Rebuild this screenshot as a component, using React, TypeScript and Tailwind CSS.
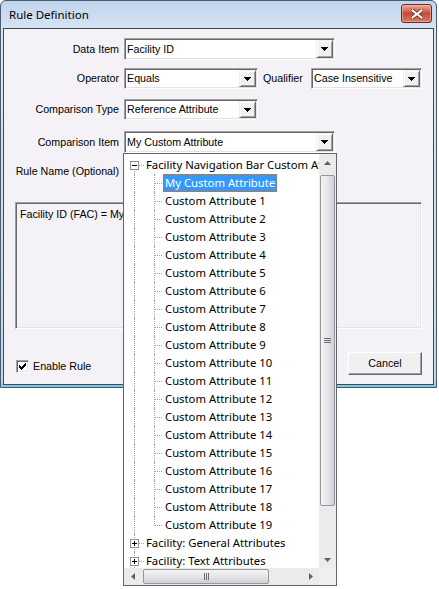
import React from 'react'

const DownGlyph = () => (
  <svg width="7" height="4" viewBox="0 0 7 4" shapeRendering="crispEdges">
    <path d="M0 0h7v1h-1v1h-1v1h-1v1h-1v-1h-1v-1h-1v-1h-1z" fill="#000" />
  </svg>
)

// classic sunken combo box
const Combo: React.FC<{ value: string; className: string }> = ({ value, className }) => (
  <div
    className={
      'flex bg-white border border-t-[#a0a0a0] border-l-[#a0a0a0] border-b-white border-r-white p-px shadow-[inset_1px_1px_0_#696969,inset_-1px_-1px_0_#e3e3e3] ' +
      className
    }
  >
    <span className="flex-1 flex items-center pl-[1px] whitespace-nowrap overflow-hidden">{value}</span>
    <span className="w-[17px] flex items-center justify-center bg-[#f0f0f0] border border-t-[#f0f0f0] border-l-[#f0f0f0] border-r-[#696969] border-b-[#696969] shadow-[inset_1px_1px_0_#fff,inset_-1px_-1px_0_#a0a0a0]">
      <DownGlyph />
    </span>
  </div>
)

const Label: React.FC<{ children: React.ReactNode }> = ({ children }) => (
  <span className="w-[115px] mr-[5px] text-right whitespace-nowrap">{children}</span>
)

const Button: React.FC<{ children: React.ReactNode }> = ({ children }) => (
  <button className="w-[74px] h-[23px] flex items-center justify-center bg-[#f0f0f0] border border-t-white border-l-white border-r-[#696969] border-b-[#696969] shadow-[inset_-1px_-1px_0_#a0a0a0]">
    {children}
  </button>
)

const Expander: React.FC<{ open: boolean }> = ({ open }) => (
  <span className="absolute left-[6px] top-[5px] w-[9px] h-[9px] border border-[#919191] bg-white">
    <span className="absolute left-[1px] top-[3px] w-[5px] h-px bg-black" />
    {!open && <span className="absolute left-[3px] top-[1px] w-px h-[5px] bg-black" />}
  </span>
)

const RootRow: React.FC<{ label: string; open: boolean; first?: boolean }> = ({ label, open, first }) => (
  <div className="relative h-[18px]">
    <span className={`absolute left-[10px] bottom-0 border-l border-dotted border-[#a0a0a0] ${first ? 'top-[9px]' : 'top-0'}`} />
    <span className="absolute left-[15px] top-[9px] w-[5px] border-t border-dotted border-[#a0a0a0]" />
    <Expander open={open} />
    <span className="absolute left-[20px] top-0 h-[18px] px-px border border-transparent leading-[16px] whitespace-nowrap">
      {label}
    </span>
  </div>
)

const ChildRow: React.FC<{ label: string; selected?: boolean; last?: boolean }> = ({ label, selected, last }) => (
  <div className="relative h-[18px]">
    <span className="absolute left-[10px] top-0 h-full border-l border-dotted border-[#a0a0a0]" />
    <span className={`absolute left-[30px] top-0 border-l border-dotted border-[#a0a0a0] ${last ? 'h-[10px]' : 'h-full'}`} />
    <span className="absolute left-[31px] top-[9px] w-[7px] border-t border-dotted border-[#a0a0a0]" />
    <span
      className={`absolute left-[39px] top-0 h-[18px] px-px border leading-[16px] whitespace-nowrap ${
        selected ? 'bg-[#3399ff] text-white border-dotted border-[#b8763a]' : 'border-transparent'
      }`}
    >
      {label}
    </span>
  </div>
)

const Thumb: React.FC<{ className: string; vertical?: boolean }> = ({ className, vertical }) => (
  <div
    className={
      'flex items-center justify-center border border-[#979797] rounded-[2px] ' +
      (vertical
        ? 'bg-gradient-to-r from-[#f4f4f4] via-[#e6e6e9] to-[#cfd0d8] '
        : 'bg-gradient-to-b from-[#f4f4f4] via-[#e6e6e9] to-[#cfd0d8] ') +
      className
    }
  >
    {vertical ? (
      <div className="flex flex-col gap-[1px]">
        <span className="w-[7px] h-px bg-[#6d6d6d]" />
        <span className="w-[7px] h-px bg-[#6d6d6d]" />
        <span className="w-[7px] h-px bg-[#6d6d6d]" />
      </div>
    ) : (
      <div className="flex gap-[1px]">
        <span className="w-px h-[7px] bg-[#6d6d6d]" />
        <span className="w-px h-[7px] bg-[#6d6d6d]" />
        <span className="w-px h-[7px] bg-[#6d6d6d]" />
      </div>
    )}
  </div>
)

const ScrollGlyph: React.FC<{ dir: 'up' | 'down' | 'left' | 'right' }> = ({ dir }) => {
  const d = {
    up: 'M0 4L3.5 0L7 4z',
    down: 'M0 0L7 0L3.5 4z',
    left: 'M4 0L4 7L0 3.5z',
    right: 'M0 0L4 3.5L0 7z',
  }[dir]
  const vert = dir === 'up' || dir === 'down'
  return (
    <svg width={vert ? 7 : 4} height={vert ? 4 : 7} viewBox={vert ? '0 0 7 4' : '0 0 4 7'}>
      <path d={d} fill="#606060" />
    </svg>
  )
}

const childLabels = ['My Custom Attribute', ...Array.from({ length: 19 }, (_, i) => `Custom Attribute ${i + 1}`)]

const TreeDropdown: React.FC = () => (
  <div className="absolute left-[123px] top-[153px] w-[214px] h-[433px] border border-[#646464] bg-white flex flex-col font-['Noto_Sans',sans-serif] text-[11.3px] text-black">
    <div className="flex flex-1 min-h-0">
      <div className="flex-1 min-w-0 overflow-hidden pt-[2px]">
        <RootRow label="Facility Navigation Bar Custom Attributes" open first />
        {childLabels.map((label, i) => (
          <ChildRow key={label} label={label} selected={i === 0} last={i === childLabels.length - 1} />
        ))}
        <RootRow label="Facility: General Attributes" open={false} />
        <RootRow label="Facility: Text Attributes" open={false} />
      </div>
      <div className="w-[17px] flex flex-col bg-[#ebebed]">
        <div className="h-[17px] flex items-center justify-center">
          <ScrollGlyph dir="up" />
        </div>
        <Thumb vertical className="mt-[4px] mx-px h-[331px]" />
        <div className="flex-1" />
        <div className="h-[17px] flex items-center justify-center">
          <ScrollGlyph dir="down" />
        </div>
      </div>
    </div>
    <div className="h-[17px] flex">
      <div className="flex-1 flex bg-[#ebebed]">
        <div className="w-[17px] flex items-center justify-center">
          <ScrollGlyph dir="left" />
        </div>
        <Thumb className="ml-[2px] my-px w-[126px]" />
        <div className="flex-1" />
        <div className="w-[17px] flex items-center justify-center">
          <ScrollGlyph dir="right" />
        </div>
      </div>
      <div className="w-[17px] bg-[#f0f0f0]" />
    </div>
  </div>
)

const App: React.FC = () => {
  return (
    <div className="relative w-[439px] h-[589px] bg-white overflow-hidden">
      {/* Window */}
      <div className="w-[437px] h-[388px] flex flex-col border border-[#4c5a6d] rounded-t-[6px] bg-[linear-gradient(to_bottom,#c0d4ec,#d7e4f3_28px,#c9dbf0_300px,#b8d9ee_380px,#6fc6ea)] px-[2px] pb-[2px]">
        <div className="h-[27px] flex items-center pl-[6px] font-['Noto_Sans',sans-serif] text-[11.5px] text-black">
          <span>Rule Definition</span>
          <div className="ml-auto mr-[2px] mt-[-2px] w-[31px] h-[19px] rounded-[3px] border border-[#6e2a20] bg-gradient-to-b from-[#e9aa9c] via-[#c8473a] to-[#dc7a5c] flex items-center justify-center shadow-[inset_0_0_0_1px_rgba(255,200,190,0.5)]">
            <svg width="12" height="10" viewBox="0 0 12 10">
              <path d="M1.5 1.5L10.5 8.5M10.5 1.5L1.5 8.5" stroke="#5a3a36" strokeWidth="3.6" strokeLinecap="square" />
              <path d="M1.5 1.5L10.5 8.5M10.5 1.5L1.5 8.5" stroke="#fff" strokeWidth="2" strokeLinecap="square" />
            </svg>
          </div>
        </div>

        {/* Client area */}
        <div className="flex-1 flex flex-col border border-[#3f4a58] bg-[#f4f2f6] font-['Liberation_Sans',Arial,sans-serif] text-[10.7px] text-black">
          <div className="flex items-center mt-[9px]">
            <Label>Data Item</Label>
            <Combo value="Facility ID" className="w-[211px] h-[22px]" />
          </div>
          <div className="flex items-center mt-[8px]">
            <Label>Operator</Label>
            <Combo value="Equals" className="w-[134px] h-[21px]" />
            <span className="ml-[5px] w-[48px]">Qualifier</span>
            <Combo value="Case Insensitive" className="w-[111px] h-[21px]" />
          </div>
          <div className="flex items-center mt-[10px]">
            <Label>Comparison Type</Label>
            <Combo value="Reference Attribute" className="w-[134px] h-[21px]" />
          </div>
          <div className="flex items-center mt-[11px]">
            <Label>Comparison Item</Label>
            <Combo value="My Custom Attribute" className="w-[211px] h-[22px]" />
          </div>
          <div className="flex items-center mt-[8px]">
            <Label>Rule Name (Optional)</Label>
            <div className="w-[211px] h-[21px] bg-white border border-t-[#a0a0a0] border-l-[#a0a0a0] border-b-white border-r-white shadow-[inset_1px_1px_0_#696969]" />
          </div>
          <div className="mx-[11px] mt-[20px] h-[127px] border border-t-[#a0a0a0] border-l-[#a0a0a0] border-b-white border-r-white shadow-[inset_1px_1px_0_#696969,inset_-1px_-1px_0_#e3e3e3] px-[4px] pt-[3px]">
            Facility ID (FAC) = My Custom Attribute
          </div>
          <div className="flex items-center mx-[11px] mt-[23px]">
            <div className="flex items-center mt-[6px]">
              <span className="ml-px w-[13px] h-[13px] flex items-center justify-center bg-white border border-t-[#a0a0a0] border-l-[#a0a0a0] border-b-white border-r-white shadow-[inset_1px_1px_0_#696969,inset_-1px_-1px_0_#e3e3e3]">
                <svg width="7" height="7" viewBox="0 0 7 7" shapeRendering="crispEdges">
                  <path d="M0 2h1v1h1v1h1v-1h1v-1h1v-1h1v-1h1v3h-1v1h-1v1h-1v1h-1v1h-1v-1h-1v-1h-1v-1h-1z" fill="#000" />
                </svg>
              </span>
              <span className="ml-[4px]">Enable Rule</span>
            </div>
            <div className="ml-auto flex gap-[15px]">
              <Button>OK</Button>
              <Button>Cancel</Button>
            </div>
          </div>
        </div>
      </div>

      <TreeDropdown />
    </div>
  )
}

export default App
